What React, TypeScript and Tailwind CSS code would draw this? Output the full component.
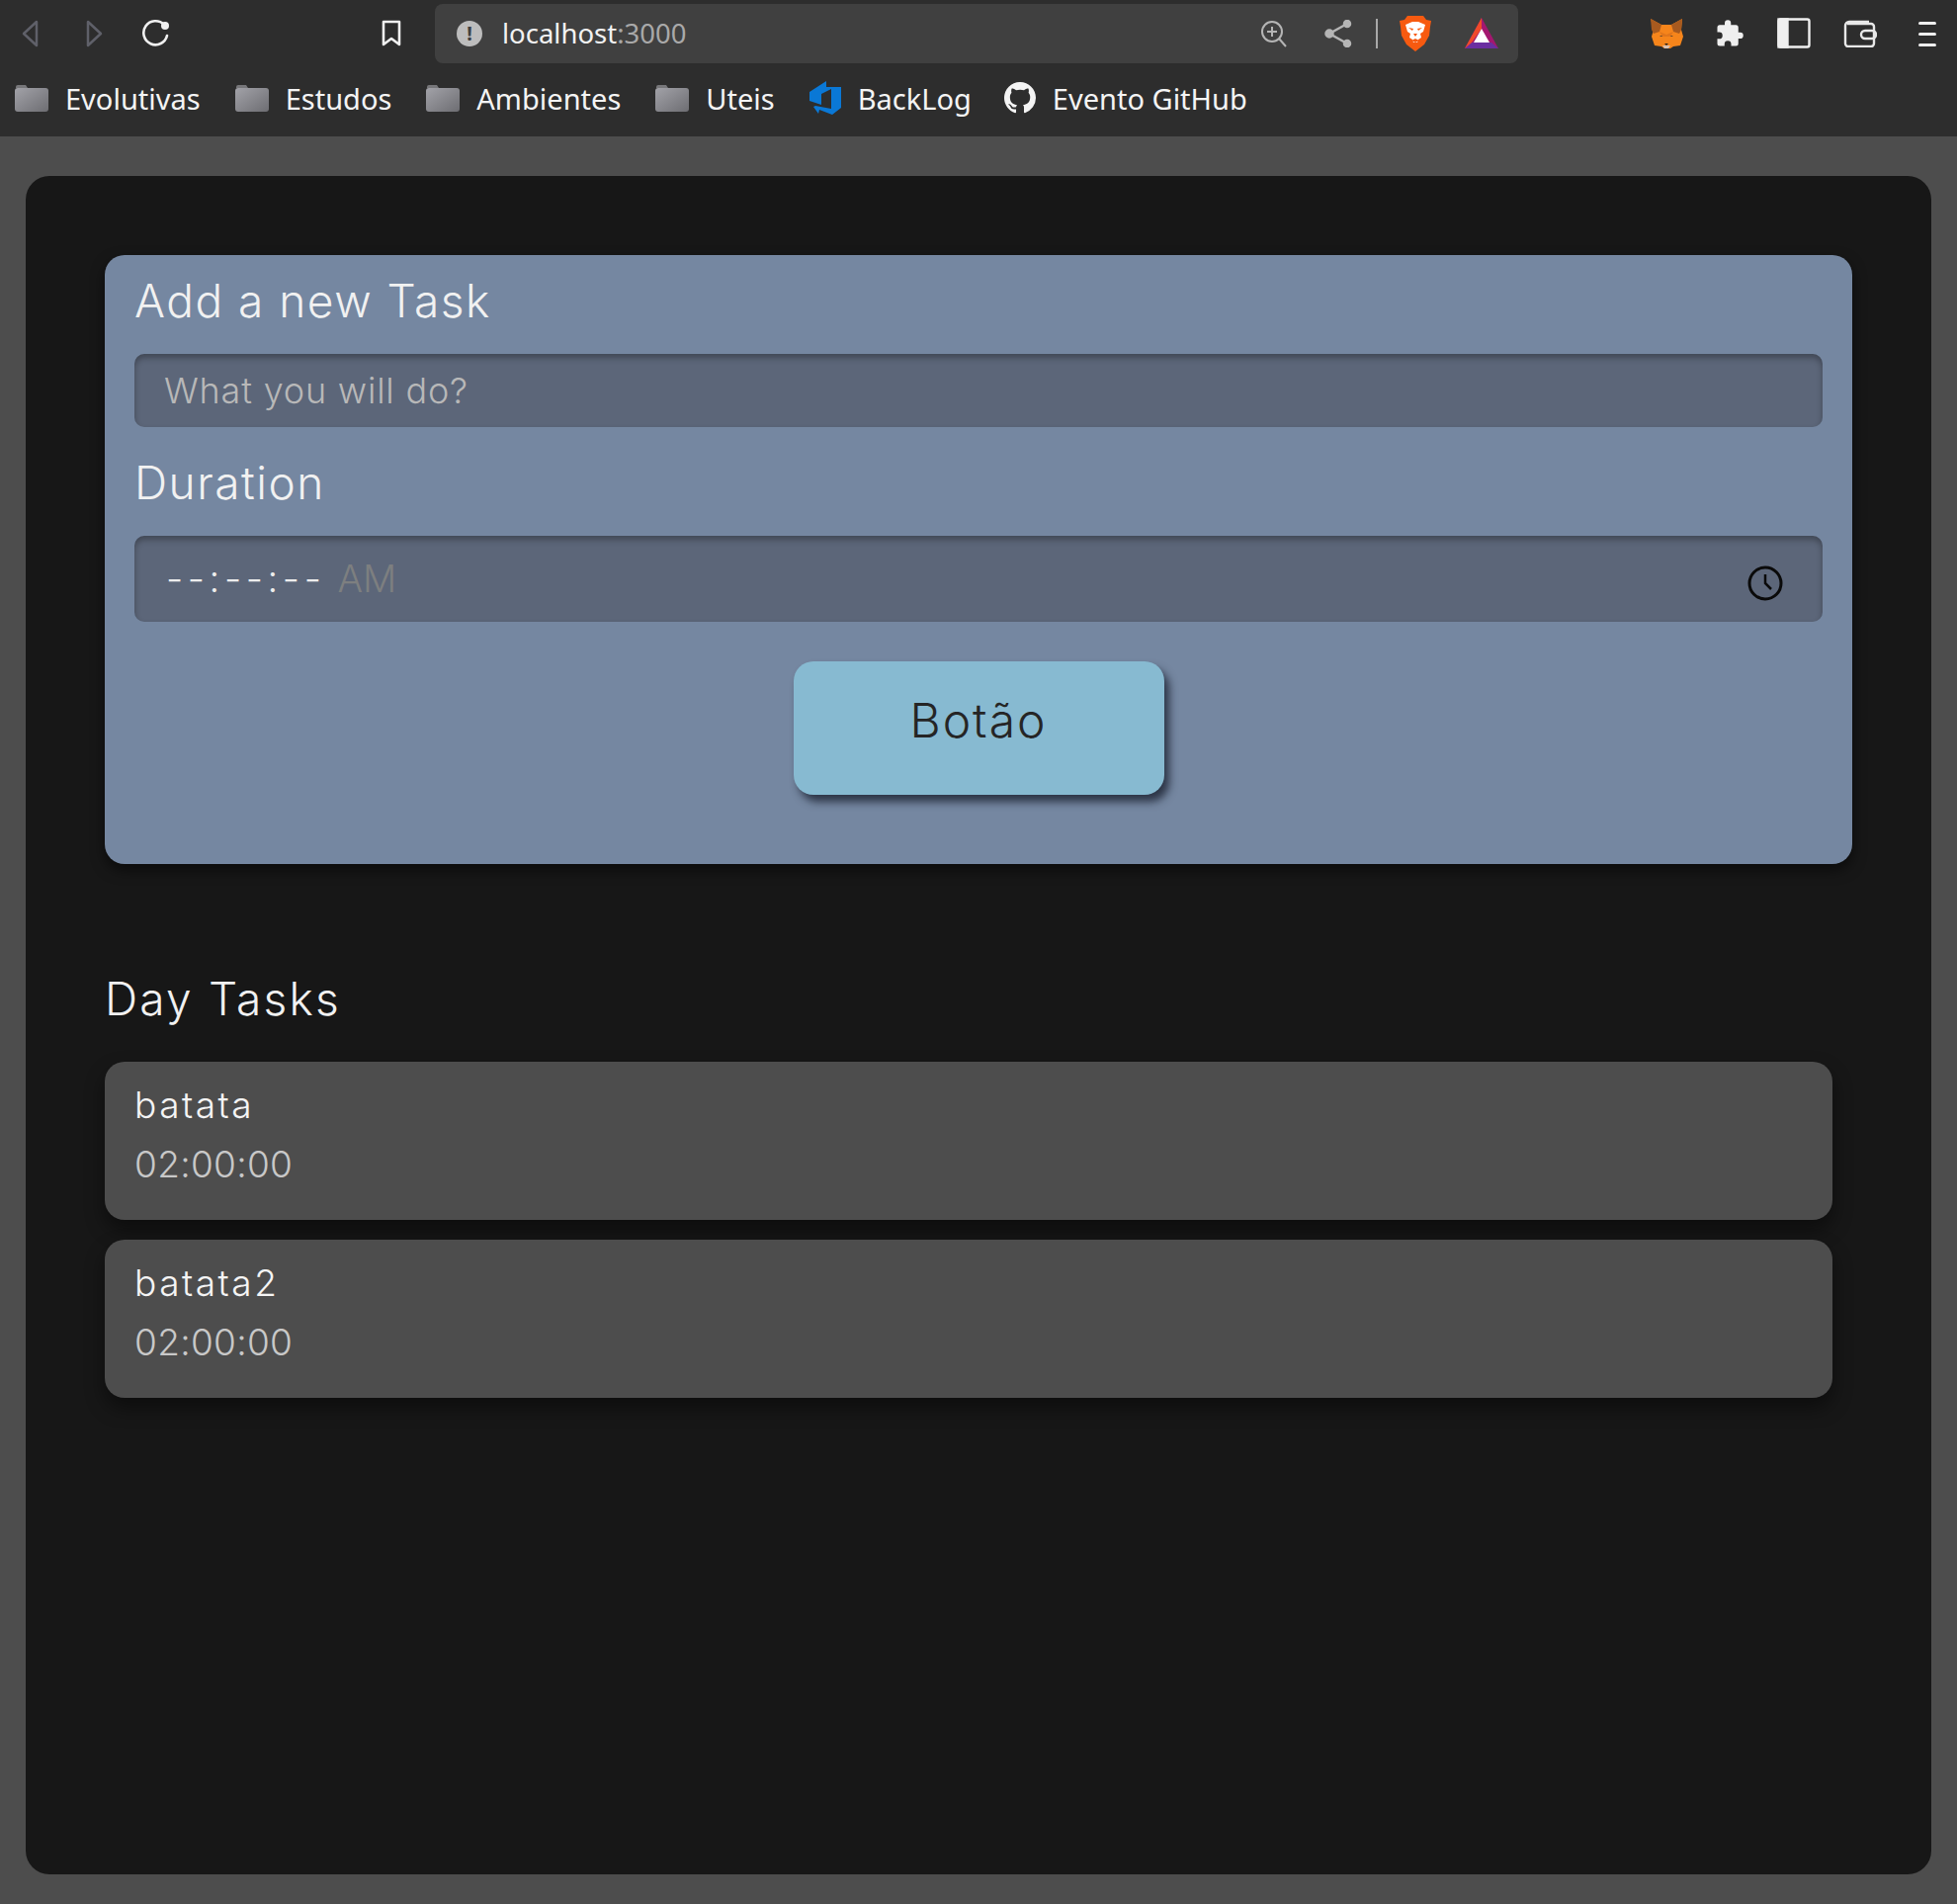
import React from "react";

const Folder = ({ id }: { id: string }) => (
  <svg width="34" height="28" viewBox="0 0 34 28" className="shrink-0">
    <defs>
      <linearGradient id={id} x1="0" y1="0" x2="1" y2="1">
        <stop offset="0" stopColor="#a2a2a8" />
        <stop offset="1" stopColor="#6d6d72" />
      </linearGradient>
    </defs>
    <path d="M1 3q0-2 2-2h8l2 3H1z" fill="#77777a" />
    <rect x="0" y="4" width="34" height="24" rx="3" fill={`url(#${id})`} />
  </svg>
);

const Back = ({ flip }: { flip?: boolean }) => (
  <svg width="18" height="28" viewBox="0 0 18 28" fill="none" stroke="#5f6069" strokeWidth="2.5" strokeLinejoin="round" className={flip ? "-scale-x-100" : ""}>
    <path d="M15 2v24L2 14z" />
  </svg>
);

const Bookmark = ({ label, icon }: { label: string; icon: React.ReactNode }) => (
  <div className="flex items-center gap-[17px]">
    {icon}
    <span className="text-[29px] leading-none text-[#f4f4f4]">{label}</span>
  </div>
);

const Task = ({ name }: { name: string }) => (
  <div className="h-40 rounded-[20px] bg-[#4d4d4d] px-[30px] pt-[22px] shadow-[0_10px_20px_rgba(0,0,0,0.45)]">
    <div className="text-[37px] leading-[44px] font-light tracking-[2.5px] text-[#f4f4f4]">{name}</div>
    <div className="mt-[16px] text-[37px] leading-[44px] font-light tracking-[0.3px] text-[#c8c8c8]">02:00:00</div>
  </div>
);

export default function App() {
  return (
    <div className="min-h-[1926px] bg-[#4d4d4d] font-['Inter',sans-serif]">
      <header className="h-[138px] bg-[#2d2d2d] font-['Noto_Sans',sans-serif]">
        <div className="flex h-[64px] items-center pl-[22px] pr-[21px] pt-[4px]">
          <Back />
          <div className="ml-[46px]"><Back flip /></div>
          <svg className="ml-[39px]" width="30" height="30" viewBox="0 0 30 30" fill="none" stroke="#f0f0f0" strokeWidth="2.6">
            <path d="M23 6a12 12 0 1 0 3 11" strokeLinecap="round" />
            <circle cx="24" cy="7" r="4" fill="#f0f0f0" stroke="none" />
          </svg>
          <svg className="ml-[213px]" width="20" height="28" viewBox="0 0 20 28" fill="none" stroke="#f0f0f0" strokeWidth="2.6" strokeLinejoin="round">
            <path d="M2 2h16v23l-8-6-8 6z" />
          </svg>
          <div className="ml-[34px] flex h-[60px] w-[1096px] items-center rounded-[8px] bg-[#404040] pl-[22px] pr-[19px]">
            <span className="flex h-[26px] w-[26px] items-center justify-center rounded-full bg-[#bdbdbd] text-[20px] font-bold leading-none text-[#404040]">!</span>
            <span className="ml-[20px] text-[27.5px] leading-none text-[#f2f2f2]">localhost<span className="text-[#a9a9a9]">:3000</span></span>
            <div className="ml-auto flex items-center">
              <svg width="28" height="28" viewBox="0 0 28 28" fill="none" stroke="#b5b5b5" strokeWidth="2">
                <circle cx="12" cy="12" r="10" />
                <path d="M12 7v10M7 12h10M19 19l7 8" />
              </svg>
              <svg className="ml-[37px]" width="28" height="28" viewBox="0 0 28 28" fill="#b5b5b5" stroke="#b5b5b5" strokeWidth="2.5">
                <path d="M23 4 5 14l18 10" fill="none" />
                <circle cx="23" cy="4" r="3" />
                <circle cx="5" cy="14" r="3.5" />
                <circle cx="23" cy="24" r="3" />
              </svg>
              <div className="ml-[24px] h-[30px] w-[2px] bg-[#a8a8a8]" />
              <svg className="ml-[21px]" width="34" height="38" viewBox="0 0 34 38">
                <path d="M9 1h16l3 4 5 1-1 6-1 9-5 9-9 7-9-7-5-9-1-9-1-6 5-1z" fill="#f75a10" />
                <path d="M7 10l7-3h6l7 3-2 7-3 2 1 4-3 2-1 3h-4l-1-3-3-2 1-4-3-2z" fill="#fff" />
                <path d="M10 13l5 1-1 2zM24 13l-5 1 1 2zM15 19h4l-2 3zM13 26l4-2 4 2-4 2z" fill="#f75a10" />
              </svg>
              <svg className="ml-[32px]" width="36" height="34" viewBox="0 0 36 34">
                <path d="M18 1 35 32H1z" fill="#a3176f" />
                <path d="M1 32l7-6h20l7 6z" fill="#6a2ea0" />
                <path d="M18 1 1 32l7-6 10-14z" fill="#f04a2a" />
                <path d="M18 12l8 14H10z" fill="#fff" />
              </svg>
            </div>
          </div>
          <svg className="ml-[133px]" width="34" height="32" viewBox="0 0 34 32">
            <path d="M1 1l11 6h10l11-6-1 11 2 7-3 9-7 1-3 2h-6l-3-2-7-1-3-9 2-7z" fill="#f6851b" />
            <path d="M1 1l11 6-2 7-6 2-2-4zM33 1 22 7l2 7 6 2 2-4z" fill="#a85a1f" />
            <path d="M10 14l7 3 7-3-3 5h-8z" fill="#e2761b" />
            <path d="M13 28h8l-2 3h-4z" fill="#d7c1b3" />
            <path d="M15 26h4l-2 2z" fill="#222" />
            <path d="M10 18h3l-1 1zM24 18h-3l1 1z" fill="#333" />
          </svg>
          <svg className="ml-[32px]" width="30" height="30" viewBox="0 0 24 24" fill="#efefef">
            <path d="M20.5 11H19V7a2 2 0 0 0-2-2h-4V3.5a2.5 2.5 0 0 0-5 0V5H4a2 2 0 0 0-2 2v3.8h1.5a2.7 2.7 0 0 1 0 5.4H2V20a2 2 0 0 0 2 2h3.8v-1.5a2.7 2.7 0 0 1 5.4 0V22H17a2 2 0 0 0 2-2v-4h1.5a2.5 2.5 0 0 0 0-5z" />
          </svg>
          <svg className="ml-[33px]" width="34" height="32" viewBox="0 0 34 32" fill="none" stroke="#efefef" strokeWidth="2.4">
            <rect x="1.5" y="1.5" width="31" height="28" rx="2" />
            <rect x="1.5" y="1.5" width="9" height="28" fill="#efefef" />
          </svg>
          <svg className="ml-[33px]" width="34" height="28" viewBox="0 0 34 28" fill="none" stroke="#e8e8e8" strokeWidth="2.4">
            <path d="M4 4h24a3 3 0 0 1 3 3v17a3 3 0 0 1-3 3H5a3 3 0 0 1-3-3V6a4 4 0 0 1 4-4h20" />
            <rect x="18" y="11" width="15" height="8" rx="4" />
          </svg>
          <div className="ml-auto flex w-[18px] flex-col gap-[8px]">
            <span className="h-[3px] rounded bg-[#eeeeee]" />
            <span className="h-[3px] rounded bg-[#eeeeee]" />
            <span className="h-[3px] rounded bg-[#eeeeee]" />
          </div>
        </div>
        <div className="mt-[18px] flex items-center pl-[15px] text-[#f4f4f4]">
          <Bookmark label="Evolutivas" icon={<Folder id="f1" />} />
          <div className="ml-[35px]"><Bookmark label="Estudos" icon={<Folder id="f2" />} /></div>
          <div className="ml-[35px]"><Bookmark label="Ambientes" icon={<Folder id="f3" />} /></div>
          <div className="ml-[35px]"><Bookmark label="Uteis" icon={<Folder id="f4" />} /></div>
          <div className="ml-[35px]">
            <Bookmark
              label="BackLog"
              icon={
                <svg width="32" height="34" viewBox="0 0 32 34" fill="#0a78d6">
                  <path d="M32 6v21l-9 7-13-5-1 4-5-7 2-1 16 3V8L12 13v11L0 20V11L17 0v6z" />
                </svg>
              }
            />
          </div>
          <div className="ml-[33px]">
            <Bookmark
              label="Evento GitHub"
              icon={
                <svg width="32" height="32" viewBox="0 0 16 16" fill="#f4f4f4">
                  <path d="M8 0C3.58 0 0 3.58 0 8c0 3.54 2.29 6.53 5.47 7.59.4.07.55-.17.55-.38 0-.19-.01-.82-.01-1.49-2.01.37-2.53-.49-2.69-.94-.09-.23-.48-.94-.82-1.13-.28-.15-.68-.52-.01-.53.63-.01 1.08.58 1.23.82.72 1.21 1.87.87 2.33.66.07-.52.28-.87.51-1.07-1.78-.2-3.64-.89-3.64-3.95 0-.87.31-1.59.82-2.15-.08-.2-.36-1.02.08-2.12 0 0 .67-.21 2.2.82.64-.18 1.32-.27 2-.27s1.36.09 2 .27c1.53-1.04 2.2-.82 2.2-.82.44 1.1.16 1.92.08 2.12.51.56.82 1.27.82 2.15 0 3.07-1.87 3.75-3.65 3.95.29.25.54.73.54 1.48 0 1.07-.01 1.93-.01 2.2 0 .21.15.46.55.38A8.01 8.01 0 0 0 16 8c0-4.42-3.58-8-8-8z" />
                </svg>
              }
            />
          </div>
        </div>
      </header>

      <main className="mx-[26px] mt-[40px] h-[1718px] rounded-[24px] bg-[#171717] p-20">
        <section className="h-[616px] rounded-[20px] bg-[#7587a1] px-[30px] pt-[18px] shadow-[0_6px_14px_rgba(0,0,0,0.55)]">
          <h2 className="text-[46px] leading-[56px] font-light tracking-[1.5px] text-[#f1f1f1]">Add a new Task</h2>
          <div className="mt-[26px] flex h-[74px] items-center rounded-[10px] bg-[#5c6679] px-[30px] text-[36px] font-light tracking-[0.8px] text-[#b8b8b8] shadow-[inset_0_4px_6px_rgba(0,0,0,0.3)]">
            What you will do?
          </div>
          <h2 className="mt-[28px] text-[46px] leading-[56px] font-light tracking-[1.5px] text-[#f1f1f1]">Duration</h2>
          <div className="mt-[26px] flex h-[87px] items-center rounded-[10px] bg-[#5c6679] px-[32px] shadow-[inset_0_4px_6px_rgba(0,0,0,0.3)]">
            <span className="text-[38px] font-light tracking-[4.6px] text-[#ededed]">--:--:--</span>
            <span className="ml-[12px] text-[38px] font-light text-[#7d7f80]">AM</span>
            <svg className="ml-auto mr-[8px] mt-[8px]" width="36" height="36" viewBox="0 0 36 36" fill="none" stroke="#0a0a0a" strokeWidth="3">
              <circle cx="18" cy="18" r="16" />
              <path d="M18 9v9l6 6" strokeWidth="2.5" />
            </svg>
          </div>
          <div className="mt-10 flex justify-center">
            <button className="h-[135px] w-[375px] rounded-[20px] bg-[#87bad1] pb-[16px] text-[48px] font-light tracking-[2px] text-[#252525] shadow-[5px_7px_8px_rgba(20,25,40,0.75)]">
              Botão
            </button>
          </div>
        </section>

        <h2 className="mt-[108px] text-[46px] leading-[56px] font-light tracking-[2.2px] text-[#f1f1f1]">Day Tasks</h2>
        <div className="mt-[36px] mr-5 flex flex-col gap-5">
          <Task name="batata" />
          <Task name="batata2" />
        </div>
      </main>
    </div>
  );
}
